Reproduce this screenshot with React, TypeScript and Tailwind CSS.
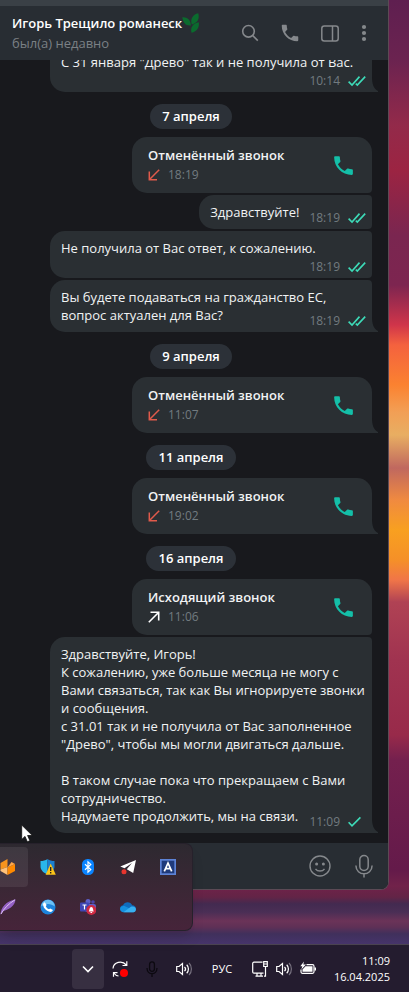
import React from "react";
import { MdPhone } from "react-icons/md";
import { clsx } from "clsx";

type MessageItem = {
  kind: "message";
  text?: string;
  // last line, shares its row with the time unless metaBelow is set
  lastLine: string;
  time: string;
  read: boolean;
  metaBelow?: boolean;
  fit?: boolean;
  position: "middle" | "last";
};

type CallItem = {
  kind: "call";
  title: string;
  time: string;
  missed: boolean;
  position: "first" | "single";
};

type DateItem = { kind: "date"; label: string };

type ChatItem = MessageItem | CallItem | DateItem;

const items: ChatItem[] = [
  { kind: "message", lastLine: 'С 31 января "Древо" так и не получила от Вас.', time: "10:14", read: true, metaBelow: true, position: "last" },
  { kind: "date", label: "7 апреля" },
  { kind: "call", title: "Отменённый звонок", time: "18:19", missed: true, position: "first" },
  { kind: "message", lastLine: "Здравствуйте!", time: "18:19", read: true, fit: true, position: "middle" },
  { kind: "message", lastLine: "Не получила от Вас ответ, к сожалению.", time: "18:19", read: true, metaBelow: true, position: "middle" },
  {
    kind: "message",
    text: "Вы будете подаваться на гражданство ЕС,",
    lastLine: "вопрос актуален для Вас?",
    time: "18:19",
    read: true,
    position: "last",
  },
  { kind: "date", label: "9 апреля" },
  { kind: "call", title: "Отменённый звонок", time: "11:07", missed: true, position: "single" },
  { kind: "date", label: "11 апреля" },
  { kind: "call", title: "Отменённый звонок", time: "19:02", missed: true, position: "single" },
  { kind: "date", label: "16 апреля" },
  { kind: "call", title: "Исходящий звонок", time: "11:06", missed: false, position: "first" },
  {
    kind: "message",
    text:
      "Здравствуйте, Игорь!\n" +
      "К сожалению, уже больше месяца не могу с Вами связаться, так как Вы игнорируете звонки и сообщения.\n" +
      'с 31.01 так и не получила от Вас заполненное "Древо", чтобы мы могли двигаться дальше.\n' +
      "\n" +
      "В таком случае пока что прекращаем с Вами сотрудничество.",
    lastLine: "Надумаете продолжить, мы на связи.",
    time: "11:09",
    read: false,
    position: "last",
  },
];

/* ---------- chat icons ---------- */

const Checks = ({ read }: { read: boolean }) => (
  <svg width="18" height="12" viewBox="0 0 18 12" fill="none" stroke="#3ddbb8" strokeWidth="1.6" className="shrink-0">
    {read ? (
      <>
        <path d="M0.600 6.600 4 10 11.500 1.600" />
        <path d="M7.800 8.600 9.300 10 17.200 1.600" />
      </>
    ) : (
      <path d="M0.600 6.200 4 9.800 12.400 1.400" />
    )}
  </svg>
);

const Tail = () => (
  <svg width="6" height="15" viewBox="0 0 6 15" className="absolute bottom-0 left-full" fill="#2a2f33">
    <path d="M0 0C0 7 1.500 11.500 6 14V15H0Z" />
  </svg>
);

const CallArrow = ({ missed }: { missed: boolean }) =>
  missed ? (
    <svg width="12" height="12" viewBox="0 0 12 12" fill="none" stroke="#e05a4b" strokeWidth="1.500">
      <path d="M11.200 0.800 1.500 10.500M1.300 2.500V10.700H9" />
    </svg>
  ) : (
    <svg width="12" height="12" viewBox="0 0 12 12" fill="none" stroke="#ffffff" strokeWidth="1.600">
      <path d="M0.800 11.200 10.500 1.500M2.500 1.300H10.700V9.500" />
    </svg>
  );

const Leaf = () => (
  <svg width="18" height="20" viewBox="0 0 18 20" fill="#0b6b2e">
    <path d="M0.300 4.300C4.800 3.800 8.800 6.500 8.800 12.500 3.500 13 1 9.500 0.300 4.300Z" />
    <path d="M16.300 0.300C17.800 6 15.500 10 9.800 11.500 8 6.500 10.500 1.500 16.300 0.300Z" />
    <path d="M16.800 9.300C17.500 14.500 15 18.500 9.500 19.800 8 14.500 11 10.300 16.800 9.300Z" />
  </svg>
);

const SearchIcon = () => (
  <svg width="18" height="18" viewBox="0 0 18 18" fill="none" stroke="currentColor" strokeWidth="1.600">
    <circle cx="7.500" cy="7.300" r="5.800" />
    <path d="m11.800 11.600 5 5" />
  </svg>
);

const PanelIcon = () => (
  <svg width="18" height="17" viewBox="0 0 18 17" fill="none" stroke="currentColor" strokeWidth="1.500">
    <rect x="0.800" y="1" width="16.400" height="15" rx="2.500" />
    <path d="M11.500 1V16" />
  </svg>
);

const DotsIcon = () => (
  <svg width="10" height="18" viewBox="0 0 10 18" fill="currentColor">
    <circle cx="5" cy="3" r="2.100" />
    <circle cx="5" cy="9" r="2.100" />
    <circle cx="5" cy="15" r="2.100" />
  </svg>
);

const SmileIcon = () => (
  <svg width="22" height="22" viewBox="0 0 22 22" fill="none" stroke="currentColor" strokeWidth="1.400">
    <circle cx="11" cy="11" r="10" />
    <circle cx="7.600" cy="9" r="1.500" fill="currentColor" stroke="none" />
    <circle cx="14.400" cy="9" r="1.500" fill="currentColor" stroke="none" />
    <path d="M6.500 13.800C8.500 16.800 13.500 16.800 15.500 13.800" />
  </svg>
);

const MicIcon = () => (
  <svg width="18" height="24" viewBox="0 0 18 24" fill="none" stroke="currentColor" strokeWidth="1.500">
    <rect x="4.800" y="1.500" width="8.400" height="15" rx="4.200" />
    <path d="M0.900 11.500C1 22.500 17 22.500 17.100 11.500M9 19.800V23.500" />
  </svg>
);

/* ---------- chat items ---------- */

const Meta = ({ time, read, className }: { time: string; read: boolean; className?: string }) => (
  <span className={clsx("flex items-center gap-2 pb-[2px] text-[12px] leading-[18px] text-[#727b80]", className)}>
    <time>{time}</time>
    <Checks read={read} />
  </span>
);

const Message = ({ item }: { item: MessageItem }) => (
  <div
    className={clsx(
      "relative mr-1.5 self-end rounded-l-[15px] rounded-tr-[4px] bg-[#2a2f33] pt-2 pr-1.5 pl-[11px] text-[13px] leading-[18px] text-[#f1f3f4]",
      item.position === "middle" && "rounded-br-[4px]",
      !item.fit && "w-[322px]"
    )}
  >
    {item.text && <p className="whitespace-pre-line">{item.text}</p>}
    {item.metaBelow ? (
      <>
        <p>{item.lastLine}</p>
        <Meta time={item.time} read={item.read} className="mt-px justify-end" />
      </>
    ) : (
      <div className="flex items-end justify-between gap-2.5">
        <p className="pb-2">{item.lastLine}</p>
        <Meta time={item.time} read={item.read} />
      </div>
    )}
    {item.position === "last" && <Tail />}
  </div>
);

const Call = ({ item }: { item: CallItem }) => (
  <div
    className={clsx(
      "relative mr-1.5 flex h-14 w-60 items-center justify-between self-end rounded-t-[15px] rounded-bl-[15px] bg-[#2a2f33] px-4",
      item.position === "first" && "rounded-br-[4px]"
    )}
  >
    <div>
      <p className="text-[13px] leading-5 font-semibold text-[#f1f3f4]">{item.title}</p>
      <p className="flex items-center gap-2 text-[12px] leading-5 text-[#727b80]">
        <CallArrow missed={item.missed} />
        <time>{item.time}</time>
      </p>
    </div>
    <button type="button" aria-label="Позвонить" className="text-[#14bfa8]">
      <MdPhone size={25} />
    </button>
    {item.position === "single" && <Tail />}
  </div>
);

const DatePill = ({ label }: { label: string }) => (
  <div className="mt-2.5 mb-1.5 h-[25px] self-center rounded-full bg-[#2c3138] px-3 text-[13px] leading-[25px] font-semibold text-white">
    {label}
  </div>
);

/* ---------- tray icons ---------- */

const trayIcons: { name: string; icon: React.ReactNode }[] = [
  {
    name: "Кубы",
    icon: (
      <svg width="16" height="16" viewBox="0 0 16 16">
        <path d="M0.500 4 7.500 0V8L0.500 10.500Z" fill="#f7941e" />
        <path d="M0.500 10.500 7.500 8V16L0.500 12Z" fill="#ffc27a" />
        <path d="M7.500 8.500 15 5V12L7.500 16Z" fill="#ff8a00" />
        <path d="M7.500 8.500 11.500 3 15 5Z" fill="#ffa84a" />
      </svg>
    ),
  },
  {
    name: "Безопасность",
    icon: (
      <svg width="16" height="16" viewBox="0 0 16 16">
        <path d="M7.500 0C5.500 1.500 3 2 0.500 2V7.500C0.500 11 3.500 13.800 7.500 15.500Z" fill="#29b6ea" />
        <path d="M7.500 0C9.500 1.500 12 2 14.500 2V7.500C14.500 11 11.500 13.800 7.500 15.500Z" fill="#1a7fd0" />
        <path d="M10.700 4.500 15.800 15.800H5.600Z" fill="#fcc419" />
        <path d="M10.700 8V12M10.700 13V14.500" stroke="#1c1c1c" strokeWidth="1.300" />
      </svg>
    ),
  },
  {
    name: "Bluetooth",
    icon: (
      <svg width="16" height="16" viewBox="0 0 16 16">
        <rect x="2" width="12" height="16" rx="5.500" fill="#0a84ff" />
        <path d="M5 5.200 10.800 10.600 8 13.200V2.800L10.800 5.400 5 10.800" fill="none" stroke="#fff" strokeWidth="1.200" />
      </svg>
    ),
  },
  {
    name: "Telegram",
    icon: (
      <svg width="16" height="16" viewBox="0 0 16 16">
        <path d="M16 1 0.300 7.500 4.500 9.300 12 4 6.800 10.200 13.200 14Z" fill="#fff" />
        <circle cx="4" cy="12.800" r="2.500" fill="#e8352e" />
      </svg>
    ),
  },
  {
    name: "Словарь",
    icon: (
      <svg width="16" height="16" viewBox="0 0 16 16">
        <rect width="16" height="16" fill="#5d83d6" />
        <rect x="1.700" y="1.700" width="12.600" height="12.600" fill="#1f3a7a" />
        <path d="M4.300 12.300 8 4 11.700 12.300M5.600 9.700H10.400" fill="none" stroke="#fff" strokeWidth="1.700" />
      </svg>
    ),
  },
  {
    name: "Перо",
    icon: (
      <svg width="16" height="16" viewBox="0 0 16 16">
        <path d="M15.500 0.300C15 5.500 12 9.500 3.500 12 2.500 13 1.800 14.500 0.500 15.700 1 8 6 2.500 15.500 0.300Z" fill="#9461c4" />
        <path d="M1 15C4 9.500 8.500 4.800 15 0.800" fill="none" stroke="#dcc3f0" strokeWidth="1" />
      </svg>
    ),
  },
  {
    name: "Телефон",
    icon: (
      <svg width="16" height="16" viewBox="0 0 16 16">
        <circle cx="8" cy="8" r="7.500" fill="#1d84dc" />
        <path d="M1.200 7.500A6.800 6.800 0 0 1 14.800 7.500C11 4 5 4 1.200 7.500Z" fill="#6cc1f5" />
        <path d="M4.800 3.300 6.600 6 5.800 7.200C6.500 8.700 7.600 9.800 9 10.300L10.200 9.400 13 11C12.300 12.700 11 13.200 9.500 12.800 6.200 11.900 3.600 9.200 3.100 6.200 2.900 4.800 3.600 3.700 4.800 3.300Z" fill="#fff" />
      </svg>
    ),
  },
  {
    name: "Teams",
    icon: (
      <svg width="16" height="16" viewBox="0 0 16 16">
        <circle cx="8" cy="2.500" r="2.500" fill="#5b5fc7" />
        <circle cx="13" cy="3" r="1.800" fill="#4b45a8" />
        <rect x="5" y="5" width="11" height="8" rx="2" fill="#5b5fc7" />
        <rect y="3.500" width="9" height="9" rx="1" fill="#3f46b5" />
        <path d="M2.500 6H6.500M4.500 6V10.500" stroke="#fff" strokeWidth="1.200" />
        <circle cx="11.300" cy="11" r="5" fill="#cf2942" />
        <path d="M8.800 12.500C9.600 11.500 9.200 8 11.300 8S13 11.500 13.800 12.500ZM10.500 13H12.100V14H10.500Z" fill="#fff" />
      </svg>
    ),
  },
  {
    name: "OneDrive",
    icon: (
      <svg width="16" height="16" viewBox="0 0 16 16">
        <path d="M0 9.500C0 7.500 1.500 6.300 3 6.200 4.500 2.500 10.500 2 12.200 6.300 14.500 6.300 16 8 16 10L8 11Z" fill="#0f6cbd" />
        <path d="M3.500 13.200C1.500 13.200 0 12 0 10 0 8 2 6.500 4.500 7L15 12C14.500 13 13.800 13.200 13 13.200Z" fill="#1490df" />
        <path d="M3.500 13.200 10.500 8C13 6.800 16 8 16 10.500 16 12 14.800 13.200 13.200 13.200Z" fill="#38b0f0" />
      </svg>
    ),
  },
];

const SpeakerIcon = () => (
  <svg width="16" height="16" viewBox="0 0 16 16" fill="none" stroke="#fff" strokeWidth="1.200">
    <path d="M0.700 5.500H3L6.500 2.500V13.500L3 10.500H0.700Z" />
    <path d="M8.500 5.800C9.700 7 9.700 9 8.500 10.200M10.700 3.800C13 6 13 10 10.700 12.200" />
    <path d="M13 2C16.200 5 16.200 11 13 14" stroke="#77717f" />
  </svg>
);

const trayButton = "flex w-8 items-center justify-center";

const Taskbar = () => (
  <footer className="flex h-12 items-center justify-end border-t border-[#4a4350] bg-[#241c2f] pr-[19px] text-white">
    <button type="button" aria-label="Показать скрытые значки" className={clsx(trayButton, "h-10 rounded bg-[#372f41]")}>
      <svg width="12" height="8" viewBox="0 0 12 8" fill="none" stroke="#fff" strokeWidth="1.600">
        <path d="M1 1.500 6 6.500 11 1.500" />
      </svg>
    </button>
    <button type="button" aria-label="Синхронизация" className={trayButton}>
      <svg width="16" height="16" viewBox="0 0 16 16" fill="none" stroke="#fff" strokeWidth="1.200">
        <path d="M1 7.500C1.500 1 10 -1.200 14.300 4M14.800 0.300V4.500H10.500M6.500 15C4.500 14.800 3 13.800 1.800 12M1.500 15.800V11.600H5.500" />
        <circle cx="12" cy="12" r="4" fill="#ff0000" stroke="none" />
      </svg>
    </button>
    <button type="button" aria-label="Микрофон" className={trayButton}>
      <svg width="12" height="16" viewBox="0 0 12 16" fill="none" stroke="#0c0910" strokeWidth="1.300">
        <rect x="3.600" y="0.800" width="4.800" height="9.500" rx="2.400" />
        <path d="M1 7C1 14.500 11 14.500 11 7M6 12.500V16" />
      </svg>
    </button>
    <button type="button" aria-label="Звук" className={trayButton}>
      <SpeakerIcon />
    </button>
    <button type="button" className="w-11 text-center text-[11px] leading-4">
      РУС
    </button>
    <button type="button" aria-label="Сеть, звук, батарея" className="ml-2 flex items-center gap-2">
      <svg width="16" height="16" viewBox="0 0 16 16" fill="none" stroke="#fff" strokeWidth="1.200">
        <path d="M10.500 1.200H2C1.200 1.200 0.700 1.700 0.700 2.500V11C0.700 11.700 1.200 12.200 2 12.200H11.500M5 12.500V15M9 12.500V15M3.500 15.200H11" />
        <path d="M11.700 0.700H15.300V5.500H11.700ZM11.700 3H15.300M13.500 5.500V15.200H12" />
      </svg>
      <SpeakerIcon />
      <svg width="16" height="16" viewBox="0 0 16 16" fill="none" stroke="#fff" strokeWidth="1.200">
        <path d="M6.500 3.700H12.500C13.400 3.700 14 4.300 14 5.200V10.800C14 11.700 13.400 12.300 12.500 12.300H2.500C1.600 12.300 1 11.700 1 10.800V8.500" />
        <path d="M5.500 5.200H12.500V10.800H2.500V8.500ZM14.500 6.500H16V9.500H14.500ZM4 0.500 0.300 5.200H2.300L1.300 8.500 6 3.500H3.300Z" fill="#fff" stroke="none" />
      </svg>
    </button>
    <button type="button" className="ml-4 w-[58px] text-right text-[11px] leading-4">
      <time className="block">11:09</time>
      <time className="block">16.04.2025</time>
    </button>
  </footer>
);

const TrayPopup = () => (
  <div className="absolute top-full left-0 -mt-[47px] w-[193px] overflow-hidden rounded-r-lg border-y border-r border-[#26212b] bg-linear-to-b from-[#2d2930] to-[#46243a] py-[3px] shadow-lg">
    <div className="-ml-3 grid w-[200px] grid-cols-5">
      {trayIcons.map(({ name, icon }, idx) => (
        <button
          key={name}
          type="button"
          aria-label={name}
          className={clsx("flex size-10 items-center justify-center rounded", idx === 0 && "bg-white/8")}
        >
          {icon}
        </button>
      ))}
    </div>
  </div>
);

export default function App() {
  return (
    <div className="flex min-h-screen flex-col overflow-hidden bg-[linear-gradient(to_bottom,#5f1f50_0px,#6b2350_60px,#932a4a_125px,#9c2442_170px,#7a2650_235px,#7d2550_285px,#d0354a_325px,#f4623e_345px,#fb8230_385px,#f29f55_412px,#e8ae62_435px,#c0685f_468px,#f08a40_500px,#f8a020_530px,#f59028_560px,#f07548_580px,#b04254_602px,#a03350_660px,#982a4a_735px,#74204e_760px,#641a4a_870px,#71224a_886px,#632446_897px,#432a50_904px,#4a2e55_912px,#6b3358_921px,#5f3056_927px,#40305c_934px,#46346a_944px)] font-['Open_Sans','Noto_Sans',sans-serif]">
      <div className="relative z-10 mr-5">
        <main className="overflow-hidden rounded-br-lg border-r border-b border-[#5c4a55] bg-[#18191d]">
          <div className="h-1.5 bg-[#3a4046]" />
          <header className="relative z-10 flex h-[54px] items-center bg-[#282d33] pr-[19px] pl-3">
            <div className="flex-1">
              <h1 className="flex h-5 items-center text-[13px] leading-5 font-semibold whitespace-nowrap text-white">
                Игорь Трещило романеск
                <Leaf />
              </h1>
              <p className="text-[13px] leading-5 text-[#7b8085]">был(а) недавно</p>
            </div>
            <div className="flex items-center gap-5 text-[#85888c]">
              <button type="button" aria-label="Поиск"><SearchIcon /></button>
              <button type="button" aria-label="Позвонить"><MdPhone size={22} /></button>
              <button type="button" aria-label="Боковая панель"><PanelIcon /></button>
              <button type="button" aria-label="Меню"><DotsIcon /></button>
            </div>
          </header>

          {/* history is scrolled, the oldest bubble slides under the header */}
          <section className="-mt-[15px] flex flex-col gap-[2px] pr-2.5 pb-2.5 pl-1">
            {items.map((item, idx) => {
              if (item.kind === "date") return <DatePill key={idx} label={item.label} />;
              if (item.kind === "call") return <Call key={idx} item={item} />;
              return <Message key={idx} item={item} />;
            })}
          </section>

          <form className="flex h-[46px] items-center bg-[#282d33] pr-[15px] text-[#85888c]">
            <input type="text" aria-label="Сообщение" className="min-w-0 flex-1 bg-transparent pl-3 text-[13px] text-white outline-none" />
            <button type="button" aria-label="Эмодзи"><SmileIcon /></button>
            <button type="button" aria-label="Голосовое сообщение" className="ml-6"><MicIcon /></button>
          </form>
        </main>

        <TrayPopup />

        {/* mouse pointer */}
        <svg width="12" height="19" viewBox="0 0 12 19" className="absolute bottom-[47px] left-[21px]">
          <path d="M0.700 1V15.500L4 12.400 6.300 17.800 8.900 16.700 6.600 11.500H11.300Z" fill="#fff" stroke="#111" strokeWidth="0.800" />
        </svg>
      </div>
      <div className="min-h-[54px] flex-1" />
      <Taskbar />
    </div>
  );
}
